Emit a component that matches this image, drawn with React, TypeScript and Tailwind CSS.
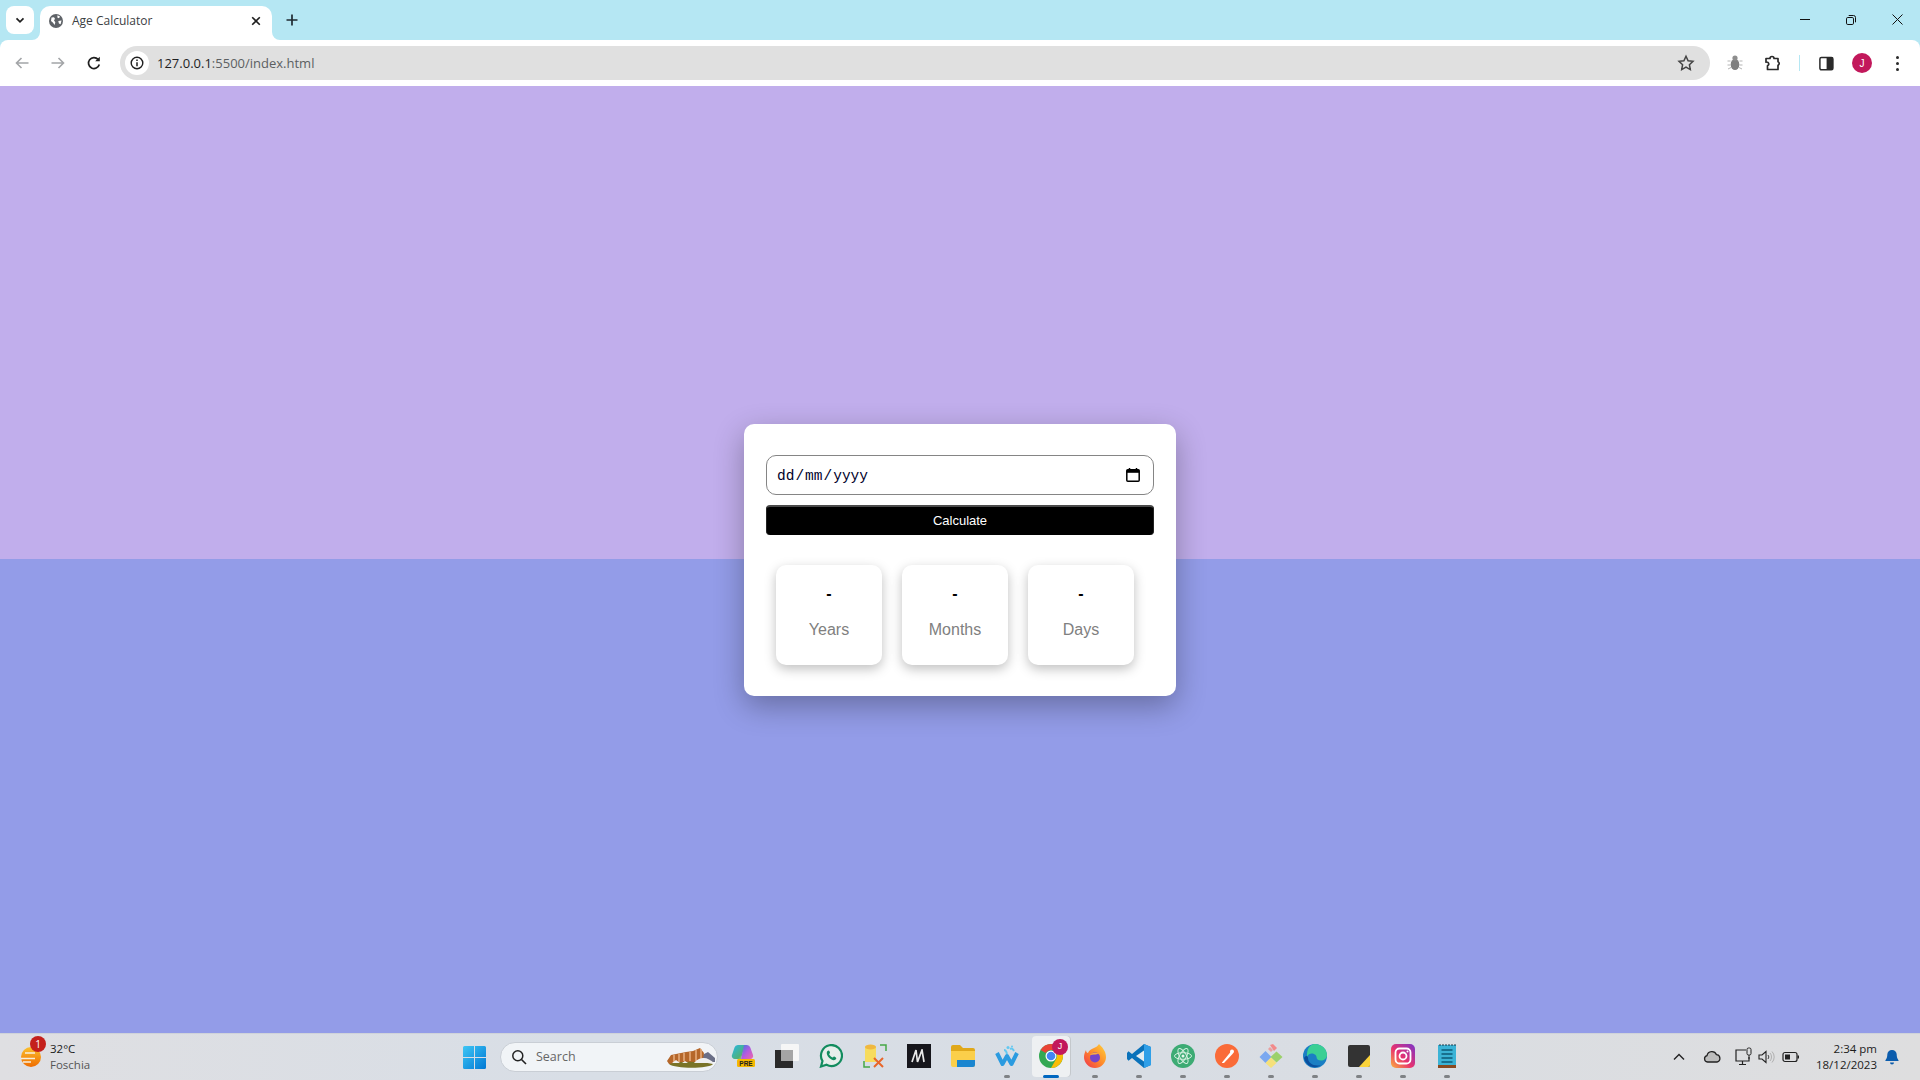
import type { ReactNode } from "react";

const uiFont = "font-['Open_Sans','Noto_Sans',sans-serif]";
const arial = "font-['Liberation_Sans',Arial,sans-serif]";

function Svg({ size = 24, box = 24, children }: { size?: number; box?: number; children: ReactNode }) {
  return (
    <svg width={size} height={size} viewBox={`0 0 ${box} ${box}`} fill="none" className="shrink-0">
      {children}
    </svg>
  );
}

function TabStrip() {
  return (
    <div className="flex h-[40px] items-start bg-[#b5e7f3] pt-[6px]">
      <div className="ml-[6px] flex h-[28px] w-[28px] items-center justify-center rounded-lg bg-white">
        <Svg size={12} box={12}>
          <path d="M2.5 4.3 6 7.8l3.5-3.5" stroke="#1f1f1f" strokeWidth="1.7" />
        </Svg>
      </div>
      <div className="relative ml-[6px] flex h-[34px] w-[232px] items-center rounded-t-[10px] bg-white pb-[4px] pl-[9px] pr-[10px]">
        <svg width="8" height="8" viewBox="0 0 8 8" className="absolute bottom-0 -left-[8px]">
          <path d="M8 0v8H0a8 8 0 0 0 8-8Z" fill="#fff" />
        </svg>
        <svg width="8" height="8" viewBox="0 0 8 8" className="absolute bottom-0 -right-[8px]">
          <path d="M0 0v8h8a8 8 0 0 1-8-8Z" fill="#fff" />
        </svg>
        <Svg size={14} box={14}>
          <circle cx="7" cy="7" r="7" fill="#5f6368" />
          <path d="M2.500 3.500 5 3.200l1 1.600-1 1.700 1.300 1.700-.6 2.800L3.800 8.600 2 7ZM8.500 1.200l2.500 1.200L10 4.300 8.300 3.500ZM9.300 7l3.200-.4-.9 3.600-1.700-.7Z" fill="#fff" />
        </Svg>
        <span className={`${uiFont} ml-[9px] text-[12px] leading-none text-[#3c4043]`}>Age Calculator</span>
        <span className="ml-auto">
          <Svg size={12} box={12}>
            <path d="m2.2 2.2 7.6 7.6m0-7.6L2.2 9.8" stroke="#1f1f1f" strokeWidth="1.6" />
          </Svg>
        </span>
      </div>
      <div className="ml-[13px] mt-[7px]">
        <Svg size={14} box={14}>
          <path d="M7 1.5v11M1.500 7h11" stroke="#1f2a30" strokeWidth="1.7" />
        </Svg>
      </div>
      <div className="ml-auto mt-[8px] flex items-center">
        <div className="flex w-[46px] justify-center">
          <svg width="10" height="2"><rect width="10" height="1" fill="#111" /></svg>
        </div>
        <div className="flex w-[46px] justify-center">
          <Svg size={10} box={10}>
            <rect x=".5" y="2.500" width="7" height="7" rx="1.300" stroke="#111" />
            <path d="M2.700 .5h4.800a2 2 0 0 1 2 2v4.800" stroke="#111" />
          </Svg>
        </div>
        <div className="flex w-[46px] justify-center">
          <Svg size={11} box={11}>
            <path d="m.5.5 10 10m0-10-10 10" stroke="#111" />
          </Svg>
        </div>
      </div>
    </div>
  );
}

function Toolbar() {
  return (
    <div className="bg-[#b5e7f3]">
      <div className="flex h-[46px] items-center rounded-t-lg bg-white">
        <div className="ml-[13px] flex w-[107px] items-center">
          <span className="mr-[18px]">
            <Svg size={18} box={18}>
              <path d="M15.500 9h-12m5-5-5 5 5 5" stroke="#a3a5a8" strokeWidth="1.600" />
            </Svg>
          </span>
          <span className="mr-[18px]">
            <Svg size={18} box={18}>
              <path d="M2.500 9h12m-5-5 5 5-5 5" stroke="#a3a5a8" strokeWidth="1.600" />
            </Svg>
          </span>
          <Svg size={18} box={18}>
            <path d="M14.300 10.500a5.500 5.500 0 1 1-1.200-5.100" stroke="#1f1f1f" strokeWidth="1.700" />
            <path d="M14.800 2.700v4.600h-4.600z" fill="#1f1f1f" />
          </Svg>
        </div>
        <div className="flex h-[34px] w-[1590px] items-center rounded-full bg-[#e0e0e0] pl-[5px] pr-[15px]">
          <div className="flex h-[24px] w-[24px] items-center justify-center rounded-full bg-white">
            <Svg size={14} box={14}>
              <circle cx="7" cy="7" r="5.800" stroke="#1f1f1f" strokeWidth="1.400" />
              <path d="M7 6.200v4M7 3.600v1.300" stroke="#1f1f1f" strokeWidth="1.500" />
            </Svg>
          </div>
          <span className={`${uiFont} ml-[8px] text-[13px] leading-none`}>
            <span className="text-[#1f1f1f]">127.0.0.1</span>
            <span className="text-[#5c5f62]">:5500/index.html</span>
          </span>
          <span className="ml-auto">
            <Svg size={18} box={18}>
              <path d="m9 2.200 2.100 4.500 4.900.6-3.600 3.400.9 4.900L9 13.200l-4.300 2.400.9-4.900L2 7.300l4.900-.6Z" stroke="#444" strokeWidth="1.500" />
            </Svg>
          </span>
        </div>
        <div className="ml-[16px] flex items-center">
          <Svg size={18} box={18}>
            <ellipse cx="9" cy="10.500" rx="4.300" ry="5.500" fill="#7e7e7e" />
            <circle cx="9" cy="4" r="2.600" fill="#8e8e8e" />
            <path d="M1.500 7h3M1.500 11h3M2 15l3-1.500M16.500 7h-3M16.500 11h-3M16 15l-3-1.500" stroke="#b5b5b5" />
          </Svg>
          <span className="ml-[20px]">
            <Svg size={18} box={18}>
              <path d="M2 4.500h4a2 2 0 0 1 4 0h4v3.300a1.800 1.800 0 0 1 0 3.400v4.300H3.500v-3.700a1.900 1.900 0 0 0-1.500-3.600Z" stroke="#2a2a2a" strokeWidth="1.700" strokeLinejoin="round" />
            </Svg>
          </span>
          <div className="ml-[17px] h-[16px] w-px bg-[#b5e7f3]" />
          <span className="ml-[19px] flex">
            <svg width="15" height="15" viewBox="0 0 15 15">
              <rect x=".9" y="1.400" width="13" height="12.400" rx="1.500" fill="#fff" stroke="#2a2a2a" strokeWidth="1.500" />
              <rect x="7.600" y="1.400" width="6.400" height="12.400" fill="#2a2a2a" />
            </svg>
          </span>
          <div className={`${arial} ml-[18px] flex h-[20px] w-[20px] items-center justify-center rounded-full bg-[#c2185b] text-[10px] text-white`}>J</div>
          <div className="ml-[24px] flex flex-col gap-[3px]">
            <span className="h-[3px] w-[3px] rounded-full bg-[#2a2a2a]" />
            <span className="h-[3px] w-[3px] rounded-full bg-[#2a2a2a]" />
            <span className="h-[3px] w-[3px] rounded-full bg-[#2a2a2a]" />
          </div>
        </div>
      </div>
    </div>
  );
}

function ResultBox({ label }: { label: string }) {
  return (
    <div className={`${arial} flex h-[100px] w-[106px] flex-col items-center rounded-[10px] bg-white shadow-[0_4px_12px_rgba(0,0,0,0.25)]`}>
      <span className="mt-[19px] text-[16px] font-bold leading-[20px] text-black">-</span>
      <span className="mt-[16px] text-[16px] leading-[20px] text-[#808080]">{label}</span>
    </div>
  );
}

function AgeCard() {
  return (
    <div className="flex h-[272px] w-[432px] flex-col rounded-[10px] bg-white px-[22px] pt-[31px] shadow-[0_10px_30px_rgba(0,0,0,0.3)]">
      <div className="flex h-[40px] items-center rounded-[10px] border border-[#858585] pl-[10px] pr-[12px]">
        <div className="mt-[4px] flex gap-[1px] font-['Liberation_Mono','DejaVu_Sans_Mono',monospace] text-[14.500px] leading-none text-[#00002a]">
          <span>dd</span>
          <span>/</span>
          <span>mm</span>
          <span>/</span>
          <span>yyyy</span>
        </div>
        <span className="ml-auto">
          <Svg size={16} box={16}>
            <rect x="1.800" y="2.800" width="12.400" height="11.400" rx="1" stroke="#000" strokeWidth="1.500" />
            <rect x="1.800" y="2.800" width="12.400" height="3" fill="#000" />
            <path d="M4.500 1v2M11.500 1v2" stroke="#000" strokeWidth="1.500" />
          </Svg>
        </span>
      </div>
      <button className={`${arial} mt-[10px] h-[30px] rounded-[4px] border-x border-t-2 border-x-[#222] border-t-[#4a4a4a] bg-black text-[13px] font-normal text-white`}>
        Calculate
      </button>
      <div className="mt-[30px] flex gap-[20px] pl-[10px]">
        <ResultBox label="Years" />
        <ResultBox label="Months" />
        <ResultBox label="Days" />
      </div>
    </div>
  );
}

function TaskIcon({ children, open = true, active = false }: { children: ReactNode; open?: boolean; active?: boolean }) {
  return (
    <div className="relative flex h-[44px] w-[44px] items-center justify-center pb-[2px]">
      {active && <div className="absolute inset-x-[3px] top-[1px] bottom-[2px] rounded-[4px] bg-[#eef0f2] shadow-[1px_0_0_#c4c8cc]" />}
      <div className="relative flex">{children}</div>
      {active ? (
        <span className="absolute bottom-[1px] h-[3px] w-[16px] rounded-full bg-[#0067c0]" />
      ) : (
        open && <span className="absolute bottom-[1px] h-[3px] w-[6px] rounded-full bg-[#7f8285]" />
      )}
    </div>
  );
}

function CenterIcons() {
  return (
    <div className="flex items-center">
      <TaskIcon open={false}>
        <svg width="24" height="24" viewBox="0 0 24 24">
          <defs>
            <linearGradient id="cpl" x1="0" y1="0" x2="1" y2="1">
              <stop offset="0" stopColor="#25b8e8" />
              <stop offset=".7" stopColor="#4fb07a" />
              <stop offset="1" stopColor="#e8d64a" />
            </linearGradient>
            <linearGradient id="cpr" x1="0" y1="0" x2="1" y2="1">
              <stop offset="0" stopColor="#3a78e0" />
              <stop offset=".5" stopColor="#b25be0" />
              <stop offset="1" stopColor="#f06aa8" />
            </linearGradient>
          </defs>
          <path d="M7 1h7L10 15H4a3 3 0 0 1-3-4l2.500-7.500A3.500 3.500 0 0 1 7 1Z" fill="url(#cpl)" />
          <path d="M13 1h3a3.500 3.500 0 0 1 3.300 2.500L22 11a3 3 0 0 1-3 4H10Z" fill="url(#cpr)" />
          <rect x="6" y="15" width="18" height="8" rx="1.500" fill="#f5b800" />
          <text x="15" y="21.500" textAnchor="middle" fontSize="6.500" fontWeight="700" fill="#222" fontFamily="Liberation Sans">PRE</text>
        </svg>
      </TaskIcon>
      <TaskIcon open={false}>
        <svg width="24" height="24" viewBox="0 0 24 24">
          <rect x="6" y="0" width="18" height="17" rx="1" fill="#f6f6f6" />
          <rect x="0" y="6" width="18" height="18" fill="#2a2a2a" />
          <rect x="6" y="6" width="12" height="11" fill="#a5a5a5" />
        </svg>
      </TaskIcon>
      <TaskIcon open={false}>
        <svg width="24" height="24" viewBox="0 0 24 24">
          <path d="M2 22.500 3.500 17A10.500 10.500 0 1 1 7.500 20.800Z" stroke="#128c5e" strokeWidth="2.200" fill="#e6eeea" />
          <path d="M8.500 7c1-1 1.700-.6 2 .3l.5 1.200c.1.500-.7 1.300-.9 1.700.8 1.500 2 2.700 3.600 3.400.5-.3 1-1.200 1.600-1l1.500.8c.7.400.6 1.300-.2 2.100-1.800 1.500-4.300.3-6.300-1.400C8.500 12.200 6.700 9 8.500 7Z" fill="#128c5e" />
        </svg>
      </TaskIcon>
      <TaskIcon open={false}>
        <svg width="24" height="24" viewBox="0 0 24 24" fill="none">
          <path d="M2 3v15h11V3Z" fill="#f7dc5e" />
          <ellipse cx="7.500" cy="3" rx="5.500" ry="2.500" fill="#f0b840" />
          <path d="M17 1h6v6M1 17v6h6" stroke="#45a845" strokeWidth="1.500" />
          <path d="m11 14 9 9m0-9-9 9" stroke="#e8662a" strokeWidth="2" />
        </svg>
      </TaskIcon>
      <TaskIcon open={false}>
        <div className="flex h-[24px] w-[24px] items-center justify-center bg-[#16161c]">
          <svg width="16" height="14" viewBox="0 0 16 14" fill="none">
            <path d="M1 13 5 1l1.500 12L11 1l2 12" stroke="#e8e8e8" strokeWidth="1.700" />
          </svg>
        </div>
      </TaskIcon>
      <TaskIcon open={false}>
        <svg width="24" height="22" viewBox="0 0 24 22">
          <path d="M0 2a2 2 0 0 1 2-2h7l3 3h10a2 2 0 0 1 2 2v3H0Z" fill="#e0a81a" />
          <path d="M0 6h24v14a2 2 0 0 1-2 2H2a2 2 0 0 1-2-2Z" fill="#fbcf4a" />
          <path d="M6 15h18v5a2 2 0 0 1-2 2H6Z" fill="#1a86d0" />
        </svg>
      </TaskIcon>
      <TaskIcon>
        <svg width="24" height="22" viewBox="0 0 24 22" fill="none">
          <path d="M2 8 7.500 19l4.500-8 4.500 8L22 8" stroke="#2b9be0" strokeWidth="4" strokeLinejoin="round" />
          <path d="M9 5c1.500 0 2.500 1.500 3 4M15 4c2-1 3 0 4 2" stroke="#64c8f0" strokeWidth="2" />
          <circle cx="13" cy="2.500" r="1.500" fill="#64c8f0" />
          <circle cx="17" cy="1.500" r="1" fill="#64c8f0" />
        </svg>
      </TaskIcon>
      <TaskIcon active>
        <div className="relative">
          <svg width="24" height="24" viewBox="0 0 24 24">
            <circle cx="12" cy="12" r="12" fill="#34a853" />
            <path d="M12 0a12 12 0 0 1 10.390 6H12a6 6 0 0 0-5.200 3L1.610 6A12 12 0 0 1 12 0Z" fill="#ea4335" />
            <path d="M22.390 6A12 12 0 0 1 12 24l5.200-9a6 6 0 0 0 0-6Z" fill="#fbbc05" />
            <circle cx="12" cy="12" r="5.500" fill="#fff" />
            <circle cx="12" cy="12" r="4.300" fill="#4285f4" />
          </svg>
          <span className={`${arial} absolute -right-[5px] -top-[5px] flex h-[16px] w-[16px] items-center justify-center rounded-full bg-[#c2185b] text-[9px] text-white`}>J</span>
        </div>
      </TaskIcon>
      <TaskIcon>
        <svg width="24" height="24" viewBox="0 0 24 24">
          <defs>
            <linearGradient id="ff" x1="1" y1="0" x2="0" y2="1">
              <stop offset="0" stopColor="#ffd43a" />
              <stop offset=".5" stopColor="#ff8a2a" />
              <stop offset="1" stopColor="#f0304f" />
            </linearGradient>
          </defs>
          <path d="M16 0c3 3 7 7 7 13a11 11 0 1 1-22 0c0-3 1-5 2-7 0 2 1 3 2 3 1-3 4-4 6-5 2-1 4-2 5-4Z" fill="url(#ff)" />
          <circle cx="12" cy="13.500" r="5" fill="#7544c9" />
          <path d="M7 11c2-2.500 6-3 9-1-1.500 0-3 .5-5 .5Z" fill="#ffb03a" />
        </svg>
      </TaskIcon>
      <TaskIcon>
        <svg width="24" height="24" viewBox="0 0 24 24">
          <path d="M17 0 24 3v18l-7 3-12-10-3.500 2.700L0 15V9l1.500-1.700L5 10Z" fill="#0a72ba" />
          <path d="M17 0 24 3v18l-7 3Z" fill="#2f9fe8" />
          <path d="M17 6.500 9 12l8 5.500Z" fill="#e4edf2" />
        </svg>
      </TaskIcon>
      <TaskIcon>
        <svg width="24" height="24" viewBox="0 0 24 24" fill="none">
          <circle cx="12" cy="12" r="12" fill="#3dab74" />
          <ellipse cx="12" cy="12" rx="8.500" ry="3.300" stroke="#d5f0e0" />
          <ellipse cx="12" cy="12" rx="8.500" ry="3.300" stroke="#d5f0e0" transform="rotate(60 12 12)" />
          <ellipse cx="12" cy="12" rx="8.500" ry="3.300" stroke="#d5f0e0" transform="rotate(120 12 12)" />
          <circle cx="12" cy="12" r="1.500" fill="#e8f8ee" />
        </svg>
      </TaskIcon>
      <TaskIcon>
        <svg width="24" height="24" viewBox="0 0 24 24" fill="none">
          <circle cx="12" cy="12" r="12" fill="#fa6b38" />
          <path d="M7 18.500 16 7.500l2 2-9 9.500H7Z" fill="#fff" />
          <circle cx="17" cy="7.500" r="2" fill="#fff" />
        </svg>
      </TaskIcon>
      <TaskIcon>
        <svg width="24" height="24" viewBox="0 0 24 24">
          <path d="m6.500 7 6 6-6 6L.5 13Z" fill="#7aa8f0" />
          <path d="m17.500 7.500 6 5.500-6 5.500-6-5.500Z" fill="#9bd16a" />
          <path d="m12 13.500 5.500 5.500-5.500 5-5.500-5Z" fill="#f5e07a" />
          <path d="m11 1 3-1 4 4-3 3Z" fill="#f28a8a" />
          <path d="m9 5 2-2 3 3-2 2Z" fill="#e9a0a0" />
        </svg>
      </TaskIcon>
      <TaskIcon>
        <svg width="24" height="24" viewBox="0 0 24 24" fill="none">
          <circle cx="12" cy="12" r="12" fill="#1b7fc4" />
          <path d="M12 0c6.500 0 12 5 12 11 0 3.500-3 5.500-6 5.500-2.500 0-4.500-1-4.500-3.500 0-3-7-6-9.500 0C3.500 5 7 0 12 0Z" fill="#3bcf94" />
          <path d="M5 14c0 5 6 9 13 7-7 5-15 1-17-7 2-3 4-2 4 0Z" fill="#0a4f9e" />
        </svg>
      </TaskIcon>
      <TaskIcon>
        <svg width="22" height="22" viewBox="0 0 22 22">
          <rect width="22" height="22" rx="2" fill="#333" />
          <path d="M22 10v10a2 2 0 0 1-2 2H11Z" fill="#fbd33a" />
        </svg>
      </TaskIcon>
      <TaskIcon>
        <svg width="24" height="24" viewBox="0 0 24 24" fill="none">
          <defs>
            <linearGradient id="ig" x1="0" y1="1" x2="1" y2="0">
              <stop offset="0" stopColor="#fbb03b" />
              <stop offset=".45" stopColor="#e8326f" />
              <stop offset="1" stopColor="#7b35c9" />
            </linearGradient>
          </defs>
          <rect width="24" height="24" rx="5" fill="url(#ig)" />
          <rect x="4.500" y="4.500" width="15" height="15" rx="4" stroke="#fff" strokeWidth="1.800" />
          <circle cx="12" cy="12" r="3.500" stroke="#fff" strokeWidth="1.800" />
          <circle cx="16.500" cy="7.500" r="1" fill="#fff" />
        </svg>
      </TaskIcon>
      <TaskIcon>
        <svg width="18" height="24" viewBox="0 0 18 24">
          <rect y="1" width="18" height="20" fill="#3bb3d6" />
          <rect y="21" width="18" height="3" fill="#8a4a20" />
          <path d="M2 0v2M5 0v2M8 0v2M11 0v2M14 0v2M17 0v2" stroke="#1a3a4a" />
          <path d="M3.500 6h11M3.500 10h11M3.500 14h11M3.500 18h11" stroke="#0e5b78" strokeWidth="1.500" />
        </svg>
      </TaskIcon>
    </div>
  );
}

function Taskbar() {
  return (
    <div className="flex h-[47px] items-center border-t border-t-[#cfd3da] bg-[linear-gradient(90deg,#dfdfe2_0%,#d8dee6_30%,#d8dde4_60%,#dededf_100%)]">
      <div className="relative flex w-[452px] items-center pb-[1px] pl-[20px]">
        <svg width="22" height="22" viewBox="0 0 22 22">
          <defs>
            <linearGradient id="sun" x1="0" y1="0" x2="0" y2="1">
              <stop offset="0" stopColor="#fbc02d" />
              <stop offset="1" stopColor="#ef6c00" />
            </linearGradient>
          </defs>
          <circle cx="11" cy="11" r="10" fill="url(#sun)" />
          <path d="M5 7h10M1 12.500h14M3 16h8" stroke="#f6f0df" strokeWidth="1.300" />
        </svg>
        <span className={`${uiFont} absolute left-[30px] -top-[5px] flex h-[16px] w-[16px] items-center justify-center rounded-full bg-[#c4201c] text-[10px] leading-none text-white`}>1</span>
        <div className={`${uiFont} ml-[8px] flex flex-col text-[11.500px] leading-[16px]`}>
          <span className="text-[#1c1c1c]">32°C</span>
          <span className="text-[#555]">Foschia</span>
        </div>
      </div>
      <TaskIconStart />
      <div className="ml-[14px] flex h-[30px] w-[218px] items-center rounded-full border border-[#c9ced5] bg-[#f1f4f7] pl-[10px]">
        <Svg size={16} box={16}>
          <circle cx="6.800" cy="6.800" r="5" stroke="#222" strokeWidth="1.500" />
          <path d="m10.500 10.500 4.500 4.500" stroke="#222" strokeWidth="1.600" />
        </Svg>
        <span className={`${uiFont} ml-[9px] text-[12.500px] leading-none text-[#666]`}>Search</span>
        <svg width="50" height="22" viewBox="0 0 50 22" className="ml-auto mr-[1px]">
          <path d="M36 9l6-3 7 6v4H36Z" fill="#6b6f87" />
          <path d="M1 15 5 9l5-1 5-1 5-1 7-1 7-3 4 5-1 6 4 3-30 2H3Z" fill="#b5672a" />
          <path d="M8 9v7M13 8v8M18 7v8M24 6v9M30 4v11M35 3v11" stroke="#e8b080" strokeWidth="1.500" />
          <path d="M3 18c10-3 30-3 44 0-4 5-38 5-44 0Z" fill="#7a7428" />
          <path d="M28 17c3-4 7-5 10-5s7 2 10 5ZM6 17l4-3 4 3ZM16 17l3-2 3 2Z" fill="#f0f0f0" />
        </svg>
      </div>
      <div className="ml-[3px]">
        <CenterIcons />
      </div>
      <div className="ml-auto flex items-center pb-[1px]">
        <Svg size={14} box={14}>
          <path d="m2 9.500 5-5 5 5" stroke="#222" strokeWidth="1.400" />
        </Svg>
        <span className="ml-[17px]">
          <Svg size={18} box={18}>
            <path d="M4.500 14a3.200 3.200 0 0 1-.5-6.300 5 5 0 0 1 9.500-1 3.700 3.700 0 0 1 .5 7.300Z" fill="#bdbdbd" stroke="#222" strokeWidth="1.300" />
          </Svg>
        </span>
        <span className="ml-[13px]">
          <Svg size={20} box={20}>
            <path d="M12 3H2v11h13V10M8.500 14v3M5 17.500h7" stroke="#222" strokeWidth="1.200" />
            <rect x="13" y="1" width="4" height="7" rx="1.500" stroke="#222" />
            <path d="M15 8v4" stroke="#222" />
          </Svg>
        </span>
        <span className="ml-[3px]">
          <Svg size={18} box={18}>
            <path d="M2 7h3l4-3.500v11L5 11H2Z" stroke="#222" strokeWidth="1.100" />
            <path d="M11 7a3 3 0 0 1 0 4" stroke="#444" />
            <path d="M13 5a6 6 0 0 1 0 8M15 3.500a8 8 0 0 1 0 11" stroke="#b0b0b0" />
          </Svg>
        </span>
        <span className="ml-[7px]">
          <Svg size={18} box={18}>
            <rect x="1" y="4.500" width="14" height="9" rx="2" stroke="#222" strokeWidth="1.200" />
            <rect x="3" y="6.500" width="5" height="5" fill="#222" />
            <rect x="15.500" y="7.500" width="1.500" height="3" fill="#222" />
          </Svg>
        </span>
        <div className={`${uiFont} ml-[16px] flex flex-col items-end text-[11.500px] leading-[16px] text-[#1c1c1c]`}>
          <span>2:34 pm</span>
          <span>18/12/2023</span>
        </div>
        <span className="ml-[7px] mr-[20px]">
          <Svg size={16} box={16}>
            <path d="M8 1a4.500 4.500 0 0 0-4.700 4.500c0 4-1.800 5-2 6.500h13.400c-.2-1.500-2-2.500-2-6.500A4.500 4.500 0 0 0 8 1ZM6 13.500h4a2 2 0 0 1-4 0Z" fill="#0b5cad" />
          </Svg>
        </span>
      </div>
    </div>
  );
}

function TaskIconStart() {
  return (
    <svg width="23" height="23" viewBox="0 0 23 23" className="ml-[11px]">
      <defs>
        <linearGradient id="win" x1="0" y1="0" x2="1" y2="1">
          <stop offset="0" stopColor="#3ec6f5" />
          <stop offset="1" stopColor="#0078d4" />
        </linearGradient>
      </defs>
      <path d="M0 1.500A1.500 1.500 0 0 1 1.500 0H11v11H0ZM12 0h9.500A1.500 1.500 0 0 1 23 1.500V11H12ZM0 12h11v11H1.500A1.500 1.500 0 0 1 0 21.500ZM12 12h11v9.500a1.500 1.500 0 0 1-1.500 1.500H12Z" fill="url(#win)" />
    </svg>
  );
}

export default function App() {
  return (
    <div className="flex h-[1080px] w-[1920px] flex-col overflow-hidden">
      <TabStrip />
      <Toolbar />
      <main className="flex flex-1 items-center justify-center bg-[linear-gradient(180deg,#c1aeec_50%,#939ce8_50%)]">
        <AgeCard />
      </main>
      <Taskbar />
    </div>
  );
}
